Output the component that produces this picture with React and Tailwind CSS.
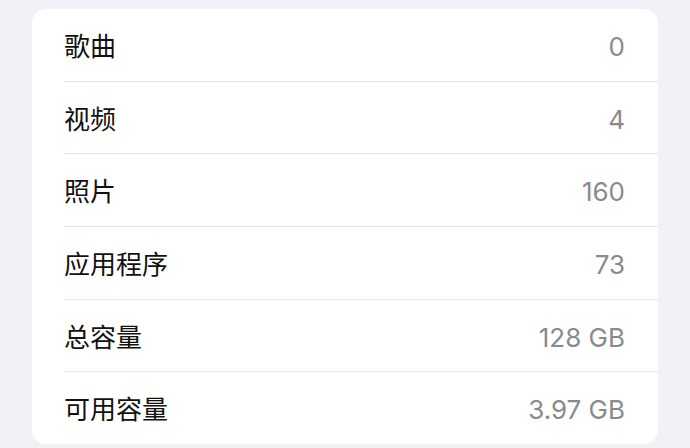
const rows = [
  { label: '歌曲', value: '0' },
  { label: '视频', value: '4' },
  { label: '照片', value: '160' },
  { label: '应用程序', value: '73' },
  { label: '总容量', value: '128 GB' },
  { label: '可用容量', value: '3.97 GB' },
];

export default function App() {
  return (
    <div
      className="h-[448px] w-[690px] overflow-hidden bg-[#f1f1f6] pt-[9px]"
      style={{ fontFamily: '"Inter", "Noto Sans CJK SC", sans-serif' }}
    >
      <div className="mx-[32px] flex h-[435px] flex-col rounded-[14px] bg-white pl-[32px]">
        {rows.map((row, i) => (
          <div
            key={row.label}
            className={
              i < rows.length - 1
                ? 'flex flex-1 items-center justify-between border-b border-[#e3e3e8] pt-[4px] pr-[33px]'
                : 'flex flex-1 items-center justify-between pt-[4px] pr-[33px]'
            }
          >
            <span className="text-[26px] leading-none text-[#111]">{row.label}</span>
            <span className="text-[26px] leading-none text-[#8a8a8e]">{row.value}</span>
          </div>
        ))}
      </div>
    </div>
  );
}
